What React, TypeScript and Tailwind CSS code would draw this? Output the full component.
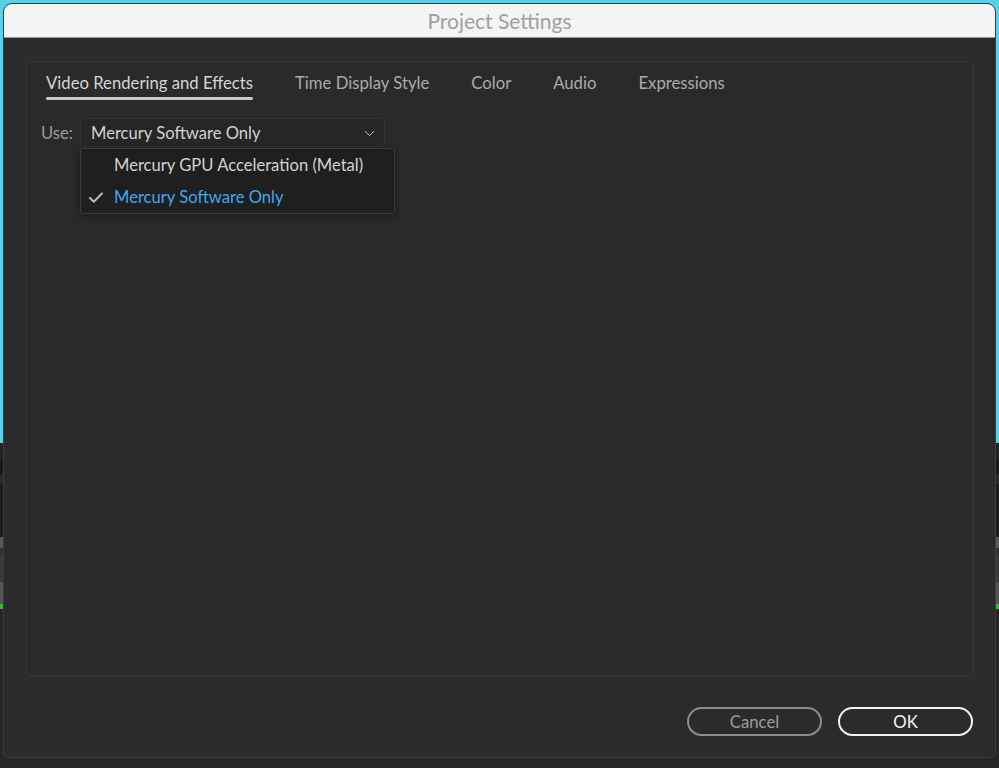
import { Check, ChevronDown } from 'lucide-react';

const tabs = ['Video Rendering and Effects', 'Time Display Style', 'Color', 'Audio', 'Expressions'];

// strips of the app window behind the dialog, only a few pixels show at each side
function Backdrop() {
  return (
    <div className="flex h-full w-full flex-col">
      <div className="h-[443px] bg-[#55d3ea]" />
      <div className="h-[17px] bg-[#222222]" />
      <div className="h-[15px] bg-[#1a1a1a]" />
      <div className="h-[9px] bg-[#2a2a2a]" />
      <div className="h-[53px] bg-[#1c1c1c]" />
      <div className="h-[11px] bg-[#5a5a5a]" />
      <div className="h-[7px] bg-[#333333]" />
      <div className="h-[27px] bg-[#3a3a3a]" />
      <div className="h-[22px] bg-[#555555]" />
      <div className="h-[5px] bg-[#22c52a]" />
      <div className="flex-1 bg-[#262626]" />
    </div>
  );
}

export default function App() {
  return (
    <div
      className="relative h-[768px] w-[999px] overflow-hidden"
      style={{ fontFamily: 'Lato, "Open Sans", sans-serif' }}
    >
      <Backdrop />

      {/* Dialog window */}
      <div className="absolute left-[3px] top-[3px] flex h-[755px] w-[993px] flex-col overflow-hidden rounded-t-[9px] rounded-b-[5px] border border-[#3c3c3c] bg-[#2b2b2b]">
        <div className="flex h-[34px] shrink-0 items-center justify-center border-b border-[#9a9a9a] bg-[#f4f4f4]">
          <span className="mt-[1px] text-[21px] text-[#a0a0a0]">Project Settings</span>
        </div>

        <div className="flex flex-1 flex-col pl-[22px] pr-[22px] pt-[23px] pb-[21px]">
          <div className="relative h-[615px] rounded-[3px] border border-[#363636] bg-[#2a2a2a]">
            {/* Tabs */}
            <div className="flex gap-[42px] pl-[19px] pt-[10px]">
              {tabs.map((t, i) => (
                <div key={t} className="flex flex-col">
                  <span className={`text-[16.7px] leading-[22px] ${i === 0 ? 'text-[#d6d6d6]' : 'text-[#ababab]'}`}>{t}</span>
                  <div className={`mt-[3px] h-[3px] rounded-full ${i === 0 ? 'bg-[#c9c9c9]' : 'bg-transparent'}`} />
                </div>
              ))}
            </div>

            {/* Use row */}
            <div className="mt-[18px] flex items-center pl-[14px]">
              <span className="mt-[1px] w-[39px] text-[16.6px] text-[#9b9b9b]">Use:</span>
              <div className="flex h-[29px] w-[305px] items-center justify-between rounded-[3px] border border-[#333333] bg-[#262626] pl-[10px] pr-[6px] pt-[1px]">
                <span className="text-[16.6px] text-[#d2d2d2]">Mercury Software Only</span>
                <ChevronDown size={17} strokeWidth={1.4} className="text-[#c4c4c4]" />
              </div>
            </div>

            {/* Open menu */}
            <div className="absolute left-[53px] top-[86px] w-[315px] rounded-[2px] border border-[#3a3a3a] bg-[#1f1f1f] py-[1px] shadow-[0_2px_6px_rgba(0,0,0,0.4)]">
              <div className="flex h-[30px] items-center pl-[33px]">
                <span className="text-[16.6px] text-[#d2d2d2]">Mercury GPU Acceleration (Metal)</span>
              </div>
              <div className="flex h-[32px] items-center pl-[6px] pt-[3px]">
                <Check size={18} strokeWidth={2.8} className="mr-[9px] text-[#b8b8b8]" />
                <span className="text-[16.6px] text-[#3ea9f2]">Mercury Software Only</span>
              </div>
            </div>
          </div>

          {/* Buttons */}
          <div className="mt-[31px] flex justify-end gap-[16px]">
            <button className="h-[29px] w-[135px] rounded-full border-2 border-[#8c8c8c] text-[16.8px] text-[#9c9c9c]">
              Cancel
            </button>
            <button className="h-[29px] w-[135px] rounded-full border-2 border-[#f2f2f2] text-[16.8px] text-[#f4f4f4]">
              OK
            </button>
          </div>
        </div>
      </div>
    </div>
  );
}
